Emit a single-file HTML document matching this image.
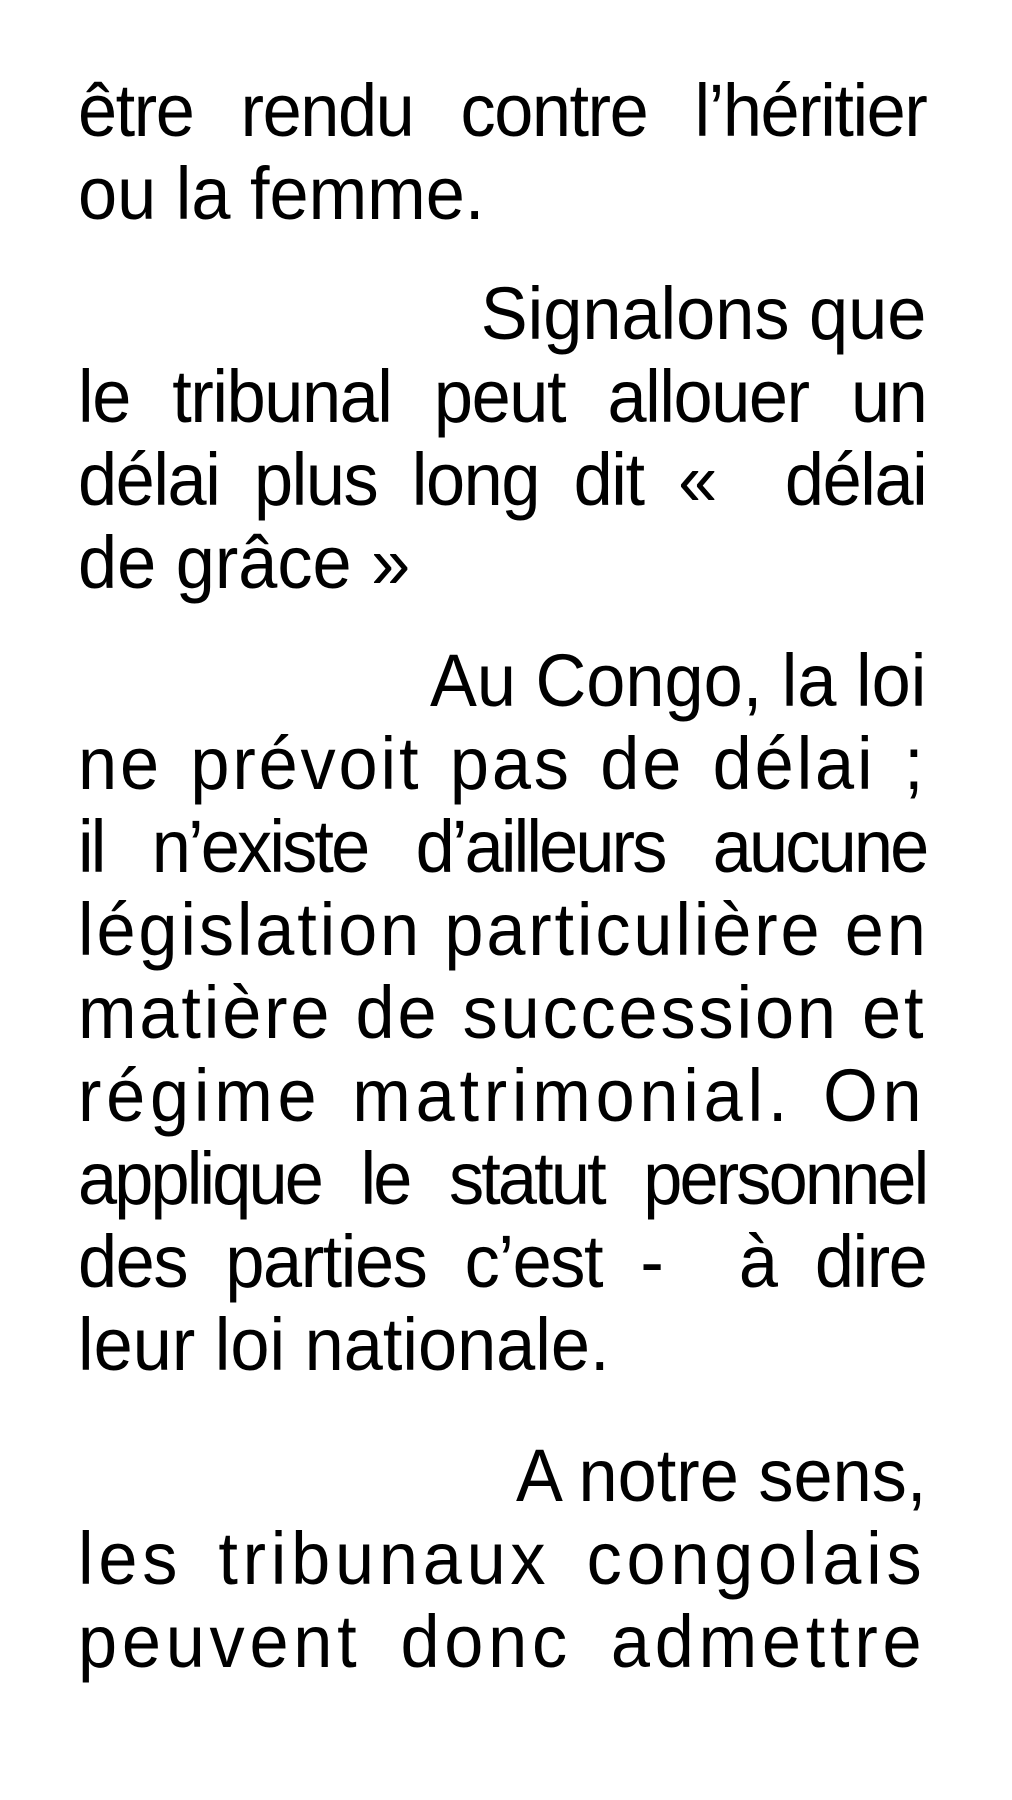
<!DOCTYPE html>
<html><head><meta charset="utf-8"><style>
html,body{margin:0;padding:0;background:#fff;width:1012px;height:1800px;overflow:hidden}
.l{position:absolute;left:78px;width:893px;font-family:"Liberation Sans","DejaVu Sans",sans-serif;font-size:74px;line-height:84px;color:#000;white-space:nowrap;text-align:justify;text-align-last:justify;transform:scaleX(0.95);transform-origin:0 0}
.e{text-align:left;text-align-last:left}
.r{text-align:right;text-align-last:right}
.t{letter-spacing:-3px}
.s{letter-spacing:-1.5px}
.w{letter-spacing:3px}
.ww{letter-spacing:5px}
</style></head><body>
<div class="l s" style="top:69px">être rendu contre l’héritier</div>
<div class="l e" style="top:152px">ou la femme.</div>
<div class="l r" style="top:272px">Signalons que</div>
<div class="l s" style="top:355px">le tribunal peut allouer un</div>
<div class="l s" style="top:438px">délai plus long dit «&nbsp; délai</div>
<div class="l e" style="top:521px">de grâce »</div>
<div class="l r" style="top:639px">Au Congo, la loi</div>
<div class="l w" style="top:722px">ne prévoit pas de délai ;</div>
<div class="l t" style="top:805px">il n’existe d’ailleurs aucune</div>
<div class="l w" style="top:888px">législation particulière en</div>
<div class="l w" style="top:971px">matière de succession et</div>
<div class="l ww" style="top:1054px">régime matrimonial. On</div>
<div class="l t" style="top:1137px">applique le statut personnel</div>
<div class="l s" style="top:1220px">des parties c’est - &nbsp;à dire</div>
<div class="l e" style="top:1303px">leur loi nationale.</div>
<div class="l r" style="top:1434px">A notre sens,</div>
<div class="l ww" style="top:1517px">les tribunaux congolais</div>
<div class="l ww" style="top:1600px">peuvent donc admettre</div>
</body></html>
